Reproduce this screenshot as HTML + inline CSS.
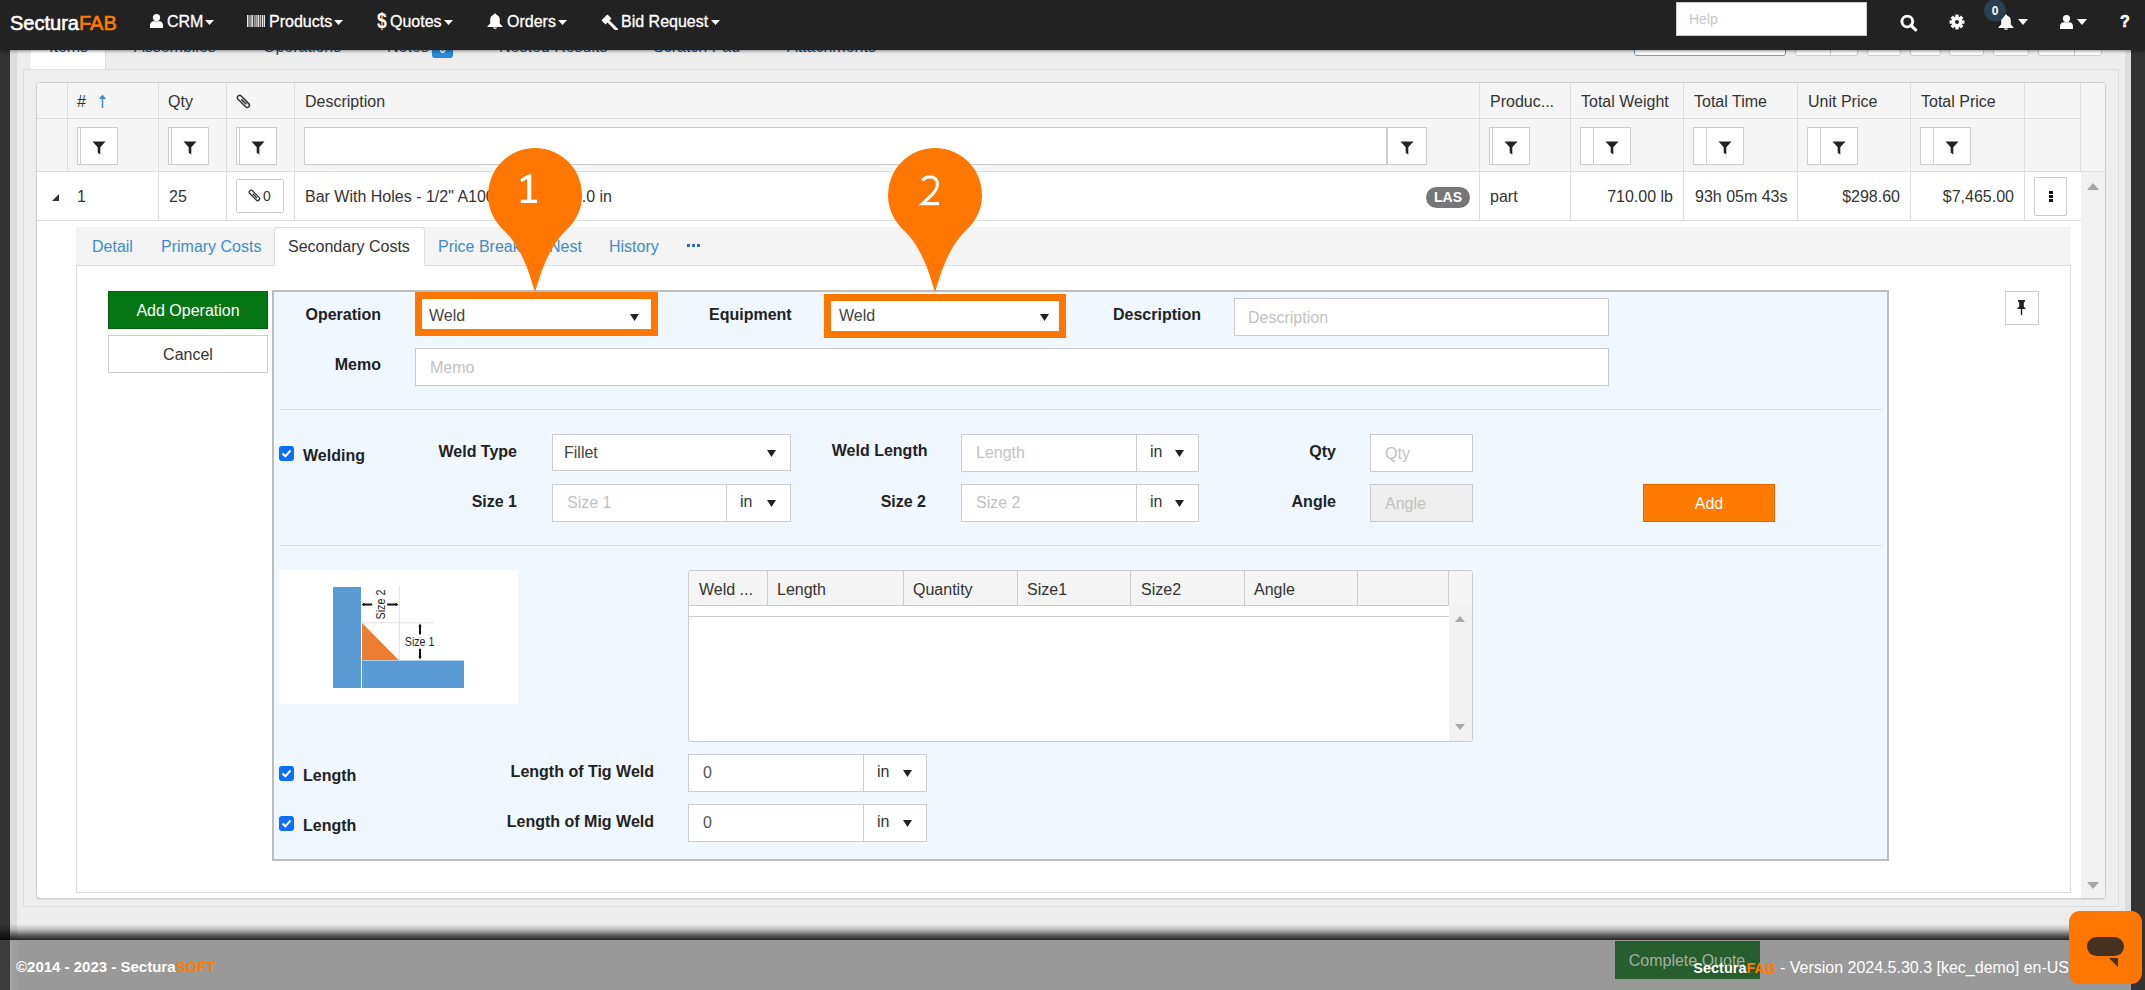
<!DOCTYPE html>
<html><head><meta charset="utf-8"><style>
html,body{margin:0;padding:0;width:2145px;height:990px;overflow:hidden;font-family:"Liberation Sans",sans-serif;}
.a{position:absolute;}
.t{position:absolute;white-space:nowrap;}
</style></head><body>
<div class="a" style="left:0px;top:0px;width:2145px;height:990px;background:#ededed"></div>
<div class="a" style="left:0px;top:0px;width:10px;height:990px;background:#333"></div>
<div class="a" style="left:10px;top:49px;width:7px;height:890px;background:#dcdcdc"></div>
<div class="a" style="left:2125px;top:49px;width:6px;height:890px;background:#dcdcdc"></div>
<div class="a" style="left:2131px;top:0px;width:14px;height:990px;background:#333"></div>
<div class="a" style="left:31px;top:30px;width:74px;height:39px;background:#fff;border-right:1px solid #ddd"></div>
<div class="t" style="top:37px;font-size:16px;font-weight:normal;color:#264d78;line-height:20px;font-family:'Liberation Sans',sans-serif;left:49px;">Items</div>
<div class="t" style="top:37px;font-size:16px;font-weight:normal;color:#264d78;line-height:20px;font-family:'Liberation Sans',sans-serif;left:134px;">Assemblies</div>
<div class="t" style="top:37px;font-size:16px;font-weight:normal;color:#264d78;line-height:20px;font-family:'Liberation Sans',sans-serif;left:263px;">Operations</div>
<div class="t" style="top:37px;font-size:16px;font-weight:normal;color:#264d78;line-height:20px;font-family:'Liberation Sans',sans-serif;left:387px;">Notes</div>
<div class="t" style="top:37px;font-size:16px;font-weight:normal;color:#264d78;line-height:20px;font-family:'Liberation Sans',sans-serif;left:499px;">Nested Results</div>
<div class="t" style="top:37px;font-size:16px;font-weight:normal;color:#264d78;line-height:20px;font-family:'Liberation Sans',sans-serif;left:653px;">Scratch Pad</div>
<div class="t" style="top:37px;font-size:16px;font-weight:normal;color:#264d78;line-height:20px;font-family:'Liberation Sans',sans-serif;left:787px;">Attachments</div>
<div class="a" style="left:432px;top:38px;width:21px;height:19.5px;background:#2a89d8;border-radius:3px"></div>
<div class="t" style="top:39px;font-size:12px;font-weight:bold;color:#fff;line-height:20px;font-family:'Liberation Sans',sans-serif;left:142.5px;width:600px;text-align:center;">0</div>
<div class="a" style="left:1634px;top:20px;width:152px;height:36px;background:#fff;border:1px solid #6a9cc5;border-radius:3px;box-sizing:border-box"></div>
<div class="a" style="left:1795px;top:20px;width:63px;height:36px;background:#fff;border:1px solid #ccc;border-radius:3px;box-sizing:border-box"></div>
<div class="a" style="left:1867px;top:20px;width:34px;height:36px;background:#fff;border:1px solid #ccc;border-radius:3px;box-sizing:border-box"></div>
<div class="a" style="left:1910px;top:20px;width:31px;height:36px;background:#fff;border:1px solid #ccc;border-radius:3px;box-sizing:border-box"></div>
<div class="a" style="left:1949px;top:20px;width:35px;height:36px;background:#fff;border:1px solid #ccc;border-radius:3px;box-sizing:border-box"></div>
<div class="a" style="left:1993px;top:20px;width:36px;height:36px;background:#fff;border:1px solid #ccc;border-radius:3px;box-sizing:border-box"></div>
<div class="a" style="left:2038px;top:20px;width:64px;height:36px;background:#fff;border:1px solid #ccc;border-radius:3px;box-sizing:border-box"></div>
<div class="a" style="left:1830px;top:20px;width:1px;height:36px;background:#ccc"></div>
<div class="a" style="left:2074px;top:20px;width:1px;height:36px;background:#ccc"></div>
<div class="a" style="left:23px;top:69px;width:2096px;height:838px;border:1px solid #ddd;box-sizing:border-box;background:#eee"></div>
<div class="a" style="left:36px;top:82px;width:2070px;height:817px;background:#fff;border:1px solid #ccc;border-radius:4px;box-sizing:border-box;box-shadow:0 1px 1px rgba(0,0,0,.08)"></div>
<div class="a" style="left:37px;top:83px;width:2068px;height:89px;background:#f5f5f5;border-radius:3px 3px 0 0"></div>
<div class="a" style="left:37px;top:118px;width:2044px;height:1px;background:#ddd"></div>
<div class="a" style="left:37px;top:171px;width:2068px;height:1px;background:#ddd"></div>
<div class="a" style="left:37px;top:220px;width:2044px;height:1px;background:#ddd"></div>
<div class="a" style="left:67px;top:83px;width:1px;height:89px;background:#ddd"></div>
<div class="a" style="left:158px;top:83px;width:1px;height:138px;background:#ddd"></div>
<div class="a" style="left:226px;top:83px;width:1px;height:138px;background:#ddd"></div>
<div class="a" style="left:294px;top:83px;width:1px;height:138px;background:#ddd"></div>
<div class="a" style="left:1479px;top:83px;width:1px;height:138px;background:#ddd"></div>
<div class="a" style="left:1570px;top:83px;width:1px;height:138px;background:#ddd"></div>
<div class="a" style="left:1683px;top:83px;width:1px;height:138px;background:#ddd"></div>
<div class="a" style="left:1797px;top:83px;width:1px;height:138px;background:#ddd"></div>
<div class="a" style="left:1910px;top:83px;width:1px;height:138px;background:#ddd"></div>
<div class="a" style="left:2024px;top:83px;width:1px;height:138px;background:#ddd"></div>
<div class="a" style="left:2080px;top:83px;width:1px;height:89px;background:#ddd"></div>
<div class="a" style="left:2080px;top:83px;width:1px;height:89px;background:#ddd"></div>
<div class="a" style="left:2081px;top:172px;width:24px;height:726px;background:#f1f1f1"></div>
<svg class="a" style="left:2087px;top:183px;" width="12" height="7" viewBox="0 0 12 7"><path d="M0 7H12L6 0Z" fill="#a8a8a8"/></svg>
<svg class="a" style="left:2087px;top:882px;" width="12" height="7" viewBox="0 0 12 7"><path d="M0 0H12L6 7Z" fill="#a8a8a8"/></svg>
<div class="t" style="top:92px;font-size:16px;font-weight:normal;color:#333;line-height:20px;font-family:'Liberation Sans',sans-serif;left:77px;">#</div>
<svg class="a" style="left:98px;top:94px;" width="9" height="14" viewBox="0 0 9 14"><path d="M4.5 0.5L1 5H3.8V14H5.2V5H8Z" fill="#3a8ad6"/></svg>
<div class="t" style="top:92px;font-size:16px;font-weight:normal;color:#333;line-height:20px;font-family:'Liberation Sans',sans-serif;left:168px;">Qty</div>
<div class="t" style="top:92px;font-size:16px;font-weight:normal;color:#333;line-height:20px;font-family:'Liberation Sans',sans-serif;left:305px;">Description</div>
<div class="t" style="top:92px;font-size:16px;font-weight:normal;color:#333;line-height:20px;font-family:'Liberation Sans',sans-serif;left:1490px;">Produc...</div>
<div class="t" style="top:92px;font-size:16px;font-weight:normal;color:#333;line-height:20px;font-family:'Liberation Sans',sans-serif;left:1581px;">Total Weight</div>
<div class="t" style="top:92px;font-size:16px;font-weight:normal;color:#333;line-height:20px;font-family:'Liberation Sans',sans-serif;left:1694px;">Total Time</div>
<div class="t" style="top:92px;font-size:16px;font-weight:normal;color:#333;line-height:20px;font-family:'Liberation Sans',sans-serif;left:1808px;">Unit Price</div>
<div class="t" style="top:92px;font-size:16px;font-weight:normal;color:#333;line-height:20px;font-family:'Liberation Sans',sans-serif;left:1921px;">Total Price</div>
<svg class="a" style="left:235.5px;top:93.5px;" width="15" height="15" viewBox="0 0 15 15"><g transform="translate(7.5 7.5) rotate(-45) translate(-3 -8.5)" fill="none" stroke="#333" stroke-width="1.5"><path d="M0.8 3V13.7A2.2 2.2 0 0 0 5.2 13.7V3A2.2 2.2 0 0 0 0.8 3"/><path d="M3 12.5V5.5"/></g></svg>
<div class="a" style="left:77px;top:127px;width:41px;height:38px;background:#fff;border:1px solid #ccc;box-sizing:border-box"></div>
<div class="a" style="left:80px;top:127px;width:1px;height:38px;background:#ccc"></div>
<svg class="a" style="left:92px;top:140.5px;" width="14" height="14" viewBox="0 0 14 14"><path d="M0.5 0.5H13.5L8.3 6.3V13.5L5.7 11.8V6.3Z" fill="#222"/></svg>
<div class="a" style="left:168px;top:127px;width:41px;height:38px;background:#fff;border:1px solid #ccc;box-sizing:border-box"></div>
<div class="a" style="left:171px;top:127px;width:1px;height:38px;background:#ccc"></div>
<svg class="a" style="left:183px;top:140.5px;" width="14" height="14" viewBox="0 0 14 14"><path d="M0.5 0.5H13.5L8.3 6.3V13.5L5.7 11.8V6.3Z" fill="#222"/></svg>
<div class="a" style="left:236px;top:127px;width:41px;height:38px;background:#fff;border:1px solid #ccc;box-sizing:border-box"></div>
<div class="a" style="left:239px;top:127px;width:1px;height:38px;background:#ccc"></div>
<svg class="a" style="left:251px;top:140.5px;" width="14" height="14" viewBox="0 0 14 14"><path d="M0.5 0.5H13.5L8.3 6.3V13.5L5.7 11.8V6.3Z" fill="#222"/></svg>
<div class="a" style="left:304px;top:127px;width:1083px;height:38px;background:#fff;border:1px solid #ccc;box-sizing:border-box"></div>
<div class="a" style="left:1387px;top:127px;width:40px;height:38px;background:#fff;border:1px solid #ccc;box-sizing:border-box"></div>
<svg class="a" style="left:1400px;top:140.5px;" width="14" height="14" viewBox="0 0 14 14"><path d="M0.5 0.5H13.5L8.3 6.3V13.5L5.7 11.8V6.3Z" fill="#222"/></svg>
<div class="a" style="left:1489px;top:127px;width:41px;height:38px;background:#fff;border:1px solid #ccc;box-sizing:border-box"></div>
<div class="a" style="left:1492px;top:127px;width:1px;height:38px;background:#ccc"></div>
<svg class="a" style="left:1504px;top:140.5px;" width="14" height="14" viewBox="0 0 14 14"><path d="M0.5 0.5H13.5L8.3 6.3V13.5L5.7 11.8V6.3Z" fill="#222"/></svg>
<div class="a" style="left:1580px;top:127px;width:51px;height:38px;background:#fff;border:1px solid #ccc;box-sizing:border-box"></div>
<div class="a" style="left:1593px;top:127px;width:1px;height:38px;background:#ccc"></div>
<svg class="a" style="left:1605px;top:140.5px;" width="14" height="14" viewBox="0 0 14 14"><path d="M0.5 0.5H13.5L8.3 6.3V13.5L5.7 11.8V6.3Z" fill="#222"/></svg>
<div class="a" style="left:1693px;top:127px;width:51px;height:38px;background:#fff;border:1px solid #ccc;box-sizing:border-box"></div>
<div class="a" style="left:1706px;top:127px;width:1px;height:38px;background:#ccc"></div>
<svg class="a" style="left:1718px;top:140.5px;" width="14" height="14" viewBox="0 0 14 14"><path d="M0.5 0.5H13.5L8.3 6.3V13.5L5.7 11.8V6.3Z" fill="#222"/></svg>
<div class="a" style="left:1807px;top:127px;width:51px;height:38px;background:#fff;border:1px solid #ccc;box-sizing:border-box"></div>
<div class="a" style="left:1820px;top:127px;width:1px;height:38px;background:#ccc"></div>
<svg class="a" style="left:1832px;top:140.5px;" width="14" height="14" viewBox="0 0 14 14"><path d="M0.5 0.5H13.5L8.3 6.3V13.5L5.7 11.8V6.3Z" fill="#222"/></svg>
<div class="a" style="left:1920px;top:127px;width:51px;height:38px;background:#fff;border:1px solid #ccc;box-sizing:border-box"></div>
<div class="a" style="left:1933px;top:127px;width:1px;height:38px;background:#ccc"></div>
<svg class="a" style="left:1945px;top:140.5px;" width="14" height="14" viewBox="0 0 14 14"><path d="M0.5 0.5H13.5L8.3 6.3V13.5L5.7 11.8V6.3Z" fill="#222"/></svg>
<svg class="a" style="left:52px;top:194px;" width="7" height="7" viewBox="0 0 7 7"><path d="M7 0V7H0Z" fill="#333"/></svg>
<div class="t" style="top:187px;font-size:16px;font-weight:normal;color:#333;line-height:20px;font-family:'Liberation Sans',sans-serif;left:77px;">1</div>
<div class="t" style="top:187px;font-size:16px;font-weight:normal;color:#333;line-height:20px;font-family:'Liberation Sans',sans-serif;left:169px;">25</div>
<div class="a" style="left:236px;top:179px;width:48px;height:34px;background:#fff;border:1px solid #ccc;border-radius:2px;box-sizing:border-box"></div>
<svg class="a" style="left:248px;top:189px;" width="13" height="13" viewBox="0 0 15 15"><g transform="translate(7.5 7.5) rotate(-45) translate(-3 -8.5)" fill="none" stroke="#333" stroke-width="1.5"><path d="M0.8 3V13.7A2.2 2.2 0 0 0 5.2 13.7V3A2.2 2.2 0 0 0 0.8 3"/><path d="M3 12.5V5.5"/></g></svg>
<div class="t" style="top:186px;font-size:14px;font-weight:normal;color:#333;line-height:20px;font-family:'Liberation Sans',sans-serif;left:263px;">0</div>
<div class="t" style="top:187px;font-size:16px;font-weight:normal;color:#333;line-height:20px;font-family:'Liberation Sans',sans-serif;left:305px;">Bar With Holes - 1/2" A1008 x 3</div>
<div class="t" style="top:187px;font-size:16px;font-weight:normal;color:#333;line-height:20px;font-family:'Liberation Sans',sans-serif;left:12px;width:600px;text-align:right;">x 36.0 in</div>
<div class="a" style="left:1426px;top:187px;width:44px;height:21px;background:#777;border-radius:11px"></div>
<div class="t" style="top:187px;font-size:14px;font-weight:bold;color:#fff;line-height:20px;font-family:'Liberation Sans',sans-serif;left:1148px;width:600px;text-align:center;">LAS</div>
<div class="t" style="top:187px;font-size:16px;font-weight:normal;color:#333;line-height:20px;font-family:'Liberation Sans',sans-serif;left:1490px;">part</div>
<div class="t" style="top:187px;font-size:16px;font-weight:normal;color:#333;line-height:20px;font-family:'Liberation Sans',sans-serif;left:1073px;width:600px;text-align:right;">710.00 lb</div>
<div class="t" style="top:187px;font-size:16px;font-weight:normal;color:#333;line-height:20px;font-family:'Liberation Sans',sans-serif;left:1695px;">93h 05m 43s</div>
<div class="t" style="top:187px;font-size:16px;font-weight:normal;color:#333;line-height:20px;font-family:'Liberation Sans',sans-serif;left:1300px;width:600px;text-align:right;">$298.60</div>
<div class="t" style="top:187px;font-size:16px;font-weight:normal;color:#333;line-height:20px;font-family:'Liberation Sans',sans-serif;left:1414px;width:600px;text-align:right;">$7,465.00</div>
<div class="a" style="left:2034px;top:177px;width:33px;height:39px;background:#fff;border:1px solid #ccc;border-radius:2px;box-sizing:border-box"></div>
<div class="a" style="left:2049px;top:190.5px;width:3.5px;height:3.0px;background:#111"></div>
<div class="a" style="left:2049px;top:194.5px;width:3.5px;height:3.0px;background:#111"></div>
<div class="a" style="left:2049px;top:198.5px;width:3.5px;height:3.0px;background:#111"></div>
<div class="a" style="left:76px;top:227px;width:1995px;height:38px;background:#f4f4f4"></div>
<div class="a" style="left:274px;top:227px;width:151px;height:39px;background:#fff;border:1px solid #ddd;border-bottom:none;border-radius:4px 4px 0 0;box-sizing:border-box"></div>
<div class="t" style="top:237px;font-size:16px;font-weight:normal;color:#428bca;line-height:20px;font-family:'Liberation Sans',sans-serif;left:92px;">Detail</div>
<div class="t" style="top:237px;font-size:16px;font-weight:normal;color:#428bca;line-height:20px;font-family:'Liberation Sans',sans-serif;left:161px;">Primary Costs</div>
<div class="t" style="top:237px;font-size:16px;font-weight:normal;color:#333;line-height:20px;font-family:'Liberation Sans',sans-serif;left:288px;">Secondary Costs</div>
<div class="t" style="top:237px;font-size:16px;font-weight:normal;color:#428bca;line-height:20px;font-family:'Liberation Sans',sans-serif;left:438px;">Price Breaks</div>
<div class="t" style="top:237px;font-size:16px;font-weight:normal;color:#428bca;line-height:20px;font-family:'Liberation Sans',sans-serif;left:549px;">Nest</div>
<div class="t" style="top:237px;font-size:16px;font-weight:normal;color:#428bca;line-height:20px;font-family:'Liberation Sans',sans-serif;left:609px;">History</div>
<div class="a" style="left:687px;top:244px;width:3px;height:3px;background:#2d6fb3"></div>
<div class="a" style="left:692px;top:244px;width:3px;height:3px;background:#2d6fb3"></div>
<div class="a" style="left:697px;top:244px;width:3px;height:3px;background:#2d6fb3"></div>
<div class="a" style="left:76px;top:266px;width:1995px;height:627px;background:#fff;border:1px solid #ddd;border-top:none;box-sizing:border-box"></div>
<div class="a" style="left:76px;top:265px;width:199px;height:1px;background:#ddd"></div>
<div class="a" style="left:424px;top:265px;width:1647px;height:1px;background:#ddd"></div>
<div class="a" style="left:108px;top:291px;width:160px;height:38px;background:#067514;border:1px solid #04600e;box-sizing:border-box"></div>
<div class="t" style="top:301px;font-size:16px;font-weight:normal;color:#fff;line-height:20px;font-family:'Liberation Sans',sans-serif;left:-112px;width:600px;text-align:center;">Add Operation</div>
<div class="a" style="left:108px;top:335px;width:160px;height:38px;background:#fff;border:1px solid #ccc;box-sizing:border-box"></div>
<div class="t" style="top:345px;font-size:16px;font-weight:normal;color:#333;line-height:20px;font-family:'Liberation Sans',sans-serif;left:-112px;width:600px;text-align:center;">Cancel</div>
<div class="a" style="left:2005px;top:291px;width:34px;height:34px;background:#fff;border:1px solid #ccc;box-sizing:border-box"></div>
<svg class="a" style="left:2015px;top:300px;" width="13" height="15" viewBox="0 0 13 15"><path d="M3 0H10V1.5L8.8 2.5V6.5L11 9H7.2V15H5.8V9H2L4.2 6.5V2.5L3 1.5Z" fill="#222"/></svg>
<div class="a" style="left:272px;top:290px;width:1617px;height:571px;background:#f0f7fe;border:2px solid #bdbdbd;box-sizing:border-box"></div>
<div class="t" style="top:305px;font-size:16px;font-weight:bold;color:#222;line-height:20px;font-family:'Liberation Sans',sans-serif;left:-219px;width:600px;text-align:right;">Operation</div>
<div class="t" style="top:355px;font-size:16px;font-weight:bold;color:#222;line-height:20px;font-family:'Liberation Sans',sans-serif;left:-219px;width:600px;text-align:right;">Memo</div>
<div class="t" style="top:305px;font-size:16px;font-weight:bold;color:#222;line-height:20px;font-family:'Liberation Sans',sans-serif;left:709px;">Equipment</div>
<div class="t" style="top:305px;font-size:16px;font-weight:bold;color:#222;line-height:20px;font-family:'Liberation Sans',sans-serif;left:1113px;">Description</div>
<div class="a" style="left:415px;top:292px;width:243px;height:44px;background:#fff;border:7px solid #ff7600;box-sizing:border-box"></div>
<div class="t" style="top:306px;font-size:16px;font-weight:normal;color:#444;line-height:20px;font-family:'Liberation Sans',sans-serif;left:429px;">Weld</div>
<svg class="a" style="left:630px;top:314px;" width="9" height="7" viewBox="0 0 9 7"><path d="M0 0H9L4.5 7Z" fill="#222"/></svg>
<div class="a" style="left:824px;top:294px;width:242px;height:44px;background:#fff;border:7px solid #ff7600;box-sizing:border-box"></div>
<div class="t" style="top:306px;font-size:16px;font-weight:normal;color:#444;line-height:20px;font-family:'Liberation Sans',sans-serif;left:839px;">Weld</div>
<svg class="a" style="left:1040px;top:314px;" width="9" height="7" viewBox="0 0 9 7"><path d="M0 0H9L4.5 7Z" fill="#222"/></svg>
<div class="a" style="left:1234px;top:298px;width:375px;height:38px;background:#fff;border:1px solid #ccc;box-sizing:border-box"></div>
<div class="t" style="top:308px;font-size:16px;font-weight:normal;color:#c2c2c2;line-height:20px;font-family:'Liberation Sans',sans-serif;left:1248px;">Description</div>
<div class="a" style="left:415px;top:348px;width:1194px;height:38px;background:#fff;border:1px solid #ccc;box-sizing:border-box"></div>
<div class="t" style="top:358px;font-size:16px;font-weight:normal;color:#c2c2c2;line-height:20px;font-family:'Liberation Sans',sans-serif;left:430px;">Memo</div>
<div class="a" style="left:279px;top:409px;width:1603px;height:1px;background:#ddd"></div>
<div class="a" style="left:279px;top:545px;width:1603px;height:1px;background:#ddd"></div>
<div class="a" style="left:279px;top:446px;width:15px;height:15px;background:#0d6efd;border-radius:3px"></div>
<svg class="a" style="left:279px;top:446px;" width="15" height="15" viewBox="0 0 15 15"><path d="M3.5 7.5L6.3 10.3L11.5 4.5" fill="none" stroke="#fff" stroke-width="2"/></svg>
<div class="t" style="top:446px;font-size:16px;font-weight:bold;color:#222;line-height:20px;font-family:'Liberation Sans',sans-serif;left:303px;">Welding</div>
<div class="t" style="top:442px;font-size:16px;font-weight:bold;color:#222;line-height:20px;font-family:'Liberation Sans',sans-serif;left:-83px;width:600px;text-align:right;">Weld Type</div>
<div class="a" style="left:552px;top:434px;width:239px;height:37px;background:#fff;border:1px solid #ccc;box-sizing:border-box"></div>
<div class="t" style="top:443px;font-size:16px;font-weight:normal;color:#444;line-height:20px;font-family:'Liberation Sans',sans-serif;left:564px;">Fillet</div>
<svg class="a" style="left:767px;top:450px;" width="9" height="7" viewBox="0 0 9 7"><path d="M0 0H9L4.5 7Z" fill="#222"/></svg>
<div class="t" style="top:441px;font-size:16px;font-weight:bold;color:#222;line-height:20px;font-family:'Liberation Sans',sans-serif;left:327.5px;width:600px;text-align:right;">Weld Length</div>
<div class="a" style="left:961px;top:434px;width:238px;height:38px;background:#fff;border:1px solid #ccc;box-sizing:border-box"></div>
<div class="a" style="left:1136px;top:434px;width:1px;height:38px;background:#ccc"></div>
<div class="t" style="top:443px;font-size:16px;font-weight:normal;color:#c2c2c2;line-height:20px;font-family:'Liberation Sans',sans-serif;left:976px;">Length</div>
<div class="t" style="top:442px;font-size:16px;font-weight:normal;color:#333;line-height:20px;font-family:'Liberation Sans',sans-serif;left:1150px;">in</div>
<svg class="a" style="left:1175px;top:450px;" width="9" height="7" viewBox="0 0 9 7"><path d="M0 0H9L4.5 7Z" fill="#222"/></svg>
<div class="t" style="top:442px;font-size:16px;font-weight:bold;color:#222;line-height:20px;font-family:'Liberation Sans',sans-serif;left:736px;width:600px;text-align:right;">Qty</div>
<div class="a" style="left:1370px;top:434px;width:103px;height:38px;background:#fff;border:1px solid #ccc;box-sizing:border-box"></div>
<div class="t" style="top:444px;font-size:16px;font-weight:normal;color:#c2c2c2;line-height:20px;font-family:'Liberation Sans',sans-serif;left:1385px;">Qty</div>
<div class="t" style="top:492px;font-size:16px;font-weight:bold;color:#222;line-height:20px;font-family:'Liberation Sans',sans-serif;left:-83px;width:600px;text-align:right;">Size 1</div>
<div class="a" style="left:552px;top:484px;width:239px;height:38px;background:#fff;border:1px solid #ccc;box-sizing:border-box"></div>
<div class="a" style="left:726px;top:484px;width:1px;height:38px;background:#ccc"></div>
<div class="t" style="top:493px;font-size:16px;font-weight:normal;color:#c2c2c2;line-height:20px;font-family:'Liberation Sans',sans-serif;left:567px;">Size 1</div>
<div class="t" style="top:492px;font-size:16px;font-weight:normal;color:#333;line-height:20px;font-family:'Liberation Sans',sans-serif;left:740px;">in</div>
<svg class="a" style="left:767px;top:500px;" width="9" height="7" viewBox="0 0 9 7"><path d="M0 0H9L4.5 7Z" fill="#222"/></svg>
<div class="t" style="top:492px;font-size:16px;font-weight:bold;color:#222;line-height:20px;font-family:'Liberation Sans',sans-serif;left:326px;width:600px;text-align:right;">Size 2</div>
<div class="a" style="left:961px;top:484px;width:238px;height:38px;background:#fff;border:1px solid #ccc;box-sizing:border-box"></div>
<div class="a" style="left:1136px;top:484px;width:1px;height:38px;background:#ccc"></div>
<div class="t" style="top:493px;font-size:16px;font-weight:normal;color:#c2c2c2;line-height:20px;font-family:'Liberation Sans',sans-serif;left:976px;">Size 2</div>
<div class="t" style="top:492px;font-size:16px;font-weight:normal;color:#333;line-height:20px;font-family:'Liberation Sans',sans-serif;left:1150px;">in</div>
<svg class="a" style="left:1175px;top:500px;" width="9" height="7" viewBox="0 0 9 7"><path d="M0 0H9L4.5 7Z" fill="#222"/></svg>
<div class="t" style="top:492px;font-size:16px;font-weight:bold;color:#222;line-height:20px;font-family:'Liberation Sans',sans-serif;left:736px;width:600px;text-align:right;">Angle</div>
<div class="a" style="left:1370px;top:484px;width:103px;height:38px;background:#eee;border:1px solid #ccc;box-sizing:border-box"></div>
<div class="t" style="top:494px;font-size:16px;font-weight:normal;color:#c2c2c2;line-height:20px;font-family:'Liberation Sans',sans-serif;left:1385px;">Angle</div>
<div class="a" style="left:1643px;top:484px;width:132px;height:38px;background:#ff7a00;border:1px solid #e06800;box-sizing:border-box"></div>
<div class="t" style="top:494px;font-size:16px;font-weight:normal;color:#fff;line-height:20px;font-family:'Liberation Sans',sans-serif;left:1409px;width:600px;text-align:center;">Add</div>
<div class="a" style="left:279px;top:570px;width:239px;height:134px;background:#fff"></div>
<svg class="a" style="left:279px;top:570px;" width="239" height="134" viewBox="0 0 239 134">
<rect x="54" y="17" width="28" height="101" fill="#5b9bd5"/>
<rect x="83" y="90.5" width="102" height="27.5" fill="#5b9bd5"/>
<path d="M83 53V90H119.7Z" fill="#ed7d31"/>
<path d="M120.3 16V90M83 52.8H155" stroke="#d9d9d9" stroke-width="0.8" fill="none"/>
<path d="M84 34.5H93.2M108.2 34.5H118" stroke="#111" stroke-width="2"/>
<path d="M82.5 34.5L85.5 32.8V36.2Z M119.5 34.5L116.5 32.8V36.2Z" fill="#111"/>
<path d="M141 55V64.5M141 78.7V88" stroke="#111" stroke-width="2"/>
<path d="M141 53.5L139.3 56.5H142.7Z M141 89.6L139.3 86.6H142.7Z" fill="#111"/>
<text x="140.6" y="76.2" font-family="Liberation Sans" font-size="12" text-anchor="middle" textLength="29.6" lengthAdjust="spacingAndGlyphs" fill="#222">Size 1</text>
<text transform="translate(106 34.5) rotate(-90)" font-family="Liberation Sans" font-size="12" text-anchor="middle" textLength="30" lengthAdjust="spacingAndGlyphs" fill="#222">Size 2</text>
</svg>
<div class="a" style="left:688px;top:570px;width:785px;height:172px;background:#fff;border:1px solid #ccc;border-radius:3px;box-sizing:border-box"></div>
<div class="a" style="left:689px;top:571px;width:783px;height:34px;background:#f4f4f4;border-radius:2px 2px 0 0"></div>
<div class="a" style="left:689px;top:605px;width:760px;height:1px;background:#ccc"></div>
<div class="a" style="left:689px;top:616px;width:760px;height:1px;background:#ccc"></div>
<div class="a" style="left:767px;top:571px;width:1px;height:34px;background:#ccc"></div>
<div class="a" style="left:903px;top:571px;width:1px;height:34px;background:#ccc"></div>
<div class="a" style="left:1017px;top:571px;width:1px;height:34px;background:#ccc"></div>
<div class="a" style="left:1130px;top:571px;width:1px;height:34px;background:#ccc"></div>
<div class="a" style="left:1244px;top:571px;width:1px;height:34px;background:#ccc"></div>
<div class="a" style="left:1357px;top:571px;width:1px;height:34px;background:#ccc"></div>
<div class="a" style="left:1448px;top:571px;width:1px;height:34px;background:#ccc"></div>
<div class="a" style="left:1449px;top:605px;width:23px;height:136px;background:#f1f1f1"></div>
<svg class="a" style="left:1455px;top:616px;" width="10" height="6" viewBox="0 0 10 6"><path d="M0 6H10L5 0Z" fill="#a8a8a8"/></svg>
<svg class="a" style="left:1455px;top:724px;" width="10" height="6" viewBox="0 0 10 6"><path d="M0 0H10L5 6Z" fill="#a8a8a8"/></svg>
<div class="t" style="top:580px;font-size:16px;font-weight:normal;color:#333;line-height:20px;font-family:'Liberation Sans',sans-serif;left:699px;">Weld ...</div>
<div class="t" style="top:580px;font-size:16px;font-weight:normal;color:#333;line-height:20px;font-family:'Liberation Sans',sans-serif;left:777px;">Length</div>
<div class="t" style="top:580px;font-size:16px;font-weight:normal;color:#333;line-height:20px;font-family:'Liberation Sans',sans-serif;left:913px;">Quantity</div>
<div class="t" style="top:580px;font-size:16px;font-weight:normal;color:#333;line-height:20px;font-family:'Liberation Sans',sans-serif;left:1027px;">Size1</div>
<div class="t" style="top:580px;font-size:16px;font-weight:normal;color:#333;line-height:20px;font-family:'Liberation Sans',sans-serif;left:1141px;">Size2</div>
<div class="t" style="top:580px;font-size:16px;font-weight:normal;color:#333;line-height:20px;font-family:'Liberation Sans',sans-serif;left:1254px;">Angle</div>
<div class="a" style="left:279px;top:766px;width:15px;height:15px;background:#0d6efd;border-radius:3px"></div>
<svg class="a" style="left:279px;top:766px;" width="15" height="15" viewBox="0 0 15 15"><path d="M3.5 7.5L6.3 10.3L11.5 4.5" fill="none" stroke="#fff" stroke-width="2"/></svg>
<div class="t" style="top:766px;font-size:16px;font-weight:bold;color:#222;line-height:20px;font-family:'Liberation Sans',sans-serif;left:303px;">Length</div>
<div class="t" style="top:762px;font-size:16px;font-weight:bold;color:#222;line-height:20px;font-family:'Liberation Sans',sans-serif;left:54px;width:600px;text-align:right;">Length of Tig Weld</div>
<div class="a" style="left:688px;top:754px;width:239px;height:38px;background:#fff;border:1px solid #ccc;box-sizing:border-box"></div>
<div class="a" style="left:863px;top:754px;width:1px;height:38px;background:#ccc"></div>
<div class="t" style="top:763px;font-size:16px;font-weight:normal;color:#555;line-height:20px;font-family:'Liberation Sans',sans-serif;left:703px;">0</div>
<div class="t" style="top:762px;font-size:16px;font-weight:normal;color:#333;line-height:20px;font-family:'Liberation Sans',sans-serif;left:877px;">in</div>
<svg class="a" style="left:903px;top:770px;" width="9" height="7" viewBox="0 0 9 7"><path d="M0 0H9L4.5 7Z" fill="#222"/></svg>
<div class="a" style="left:279px;top:816px;width:15px;height:15px;background:#0d6efd;border-radius:3px"></div>
<svg class="a" style="left:279px;top:816px;" width="15" height="15" viewBox="0 0 15 15"><path d="M3.5 7.5L6.3 10.3L11.5 4.5" fill="none" stroke="#fff" stroke-width="2"/></svg>
<div class="t" style="top:816px;font-size:16px;font-weight:bold;color:#222;line-height:20px;font-family:'Liberation Sans',sans-serif;left:303px;">Length</div>
<div class="t" style="top:812px;font-size:16px;font-weight:bold;color:#222;line-height:20px;font-family:'Liberation Sans',sans-serif;left:54px;width:600px;text-align:right;">Length of Mig Weld</div>
<div class="a" style="left:688px;top:804px;width:239px;height:38px;background:#fff;border:1px solid #ccc;box-sizing:border-box"></div>
<div class="a" style="left:863px;top:804px;width:1px;height:38px;background:#ccc"></div>
<div class="t" style="top:813px;font-size:16px;font-weight:normal;color:#555;line-height:20px;font-family:'Liberation Sans',sans-serif;left:703px;">0</div>
<div class="t" style="top:812px;font-size:16px;font-weight:normal;color:#333;line-height:20px;font-family:'Liberation Sans',sans-serif;left:877px;">in</div>
<svg class="a" style="left:903px;top:820px;" width="9" height="7" viewBox="0 0 9 7"><path d="M0 0H9L4.5 7Z" fill="#222"/></svg>
<div class="a" style="left:0px;top:0px;width:2145px;height:49.5px;background:#222;box-shadow:0 1px 3px rgba(0,0,0,.45)"></div>
<div class="t" style="top:13px;font-size:20px;font-weight:normal;color:#fff;line-height:20px;font-family:'Liberation Sans',sans-serif;left:10px;-webkit-text-stroke:0.6px #fff">Sectura<span style="color:#ff7b00;-webkit-text-stroke:0.6px #ff7b00">FAB</span></div>
<svg class="a" style="left:150px;top:14px;" width="13" height="14" viewBox="0 0 13 14"><circle cx="6.5" cy="3.6" r="3.6" fill="#fff"/><path d="M0 14V11C0 8.5 2 7.2 3.5 7.2H9.5C11 7.2 13 8.5 13 11V14Z" fill="#fff"/></svg>
<div class="t" style="top:12px;font-size:16px;font-weight:normal;color:#fff;line-height:20px;font-family:'Liberation Sans',sans-serif;left:167px;-webkit-text-stroke:0.3px #fff">CRM</div>
<svg class="a" style="left:205px;top:20px;" width="9" height="5" viewBox="0 0 9 5"><path d="M0 0H9L4.5 5Z" fill="#fff"/></svg>
<svg class="a" style="left:247px;top:15px;" width="18" height="12" viewBox="0 0 18 12"><rect x="0" y="0" width="1.5" height="12" fill="#e8e8e8"/><rect x="2.5" y="0" width="1" height="12" fill="#e8e8e8"/><rect x="4.3" y="0" width="1.6" height="12" fill="#e8e8e8"/><rect x="6.8" y="0" width="0.8" height="12" fill="#e8e8e8"/><rect x="8.5" y="0" width="1.2" height="12" fill="#e8e8e8"/><rect x="10.5" y="0" width="1.8" height="12" fill="#e8e8e8"/><rect x="13.2" y="0" width="1" height="12" fill="#e8e8e8"/><rect x="15" y="0" width="1.2" height="12" fill="#e8e8e8"/><rect x="16.8" y="0" width="1.2" height="12" fill="#e8e8e8"/></svg>
<div class="t" style="top:12px;font-size:16px;font-weight:normal;color:#fff;line-height:20px;font-family:'Liberation Sans',sans-serif;left:269px;-webkit-text-stroke:0.3px #fff">Products</div>
<svg class="a" style="left:334px;top:20px;" width="9" height="5" viewBox="0 0 9 5"><path d="M0 0H9L4.5 5Z" fill="#fff"/></svg>
<div class="t" style="top:9px;font-size:22px;font-weight:bold;color:#fff;line-height:24px;font-family:'Liberation Sans',sans-serif;left:376.5px;transform:scaleX(0.8);transform-origin:left">$</div>
<div class="t" style="top:12px;font-size:16px;font-weight:normal;color:#fff;line-height:20px;font-family:'Liberation Sans',sans-serif;left:390px;-webkit-text-stroke:0.3px #fff">Quotes</div>
<svg class="a" style="left:444px;top:20px;" width="9" height="5" viewBox="0 0 9 5"><path d="M0 0H9L4.5 5Z" fill="#fff"/></svg>
<svg class="a" style="left:487px;top:13px;" width="16" height="16" viewBox="0 0 16 16"><path d="M8 0.5C8.9 0.5 9.3 1.2 9.3 1.8C11.6 2.4 12.8 4.3 12.8 6.8V10.5L15.5 13.2V14H0.5V13.2L3.2 10.5V6.8C3.2 4.3 4.4 2.4 6.7 1.8C6.7 1.2 7.1 0.5 8 0.5ZM6 14.6H10C10 15.4 9.1 16 8 16C6.9 16 6 15.4 6 14.6Z" fill="#fff"/></svg>
<div class="t" style="top:12px;font-size:16px;font-weight:normal;color:#fff;line-height:20px;font-family:'Liberation Sans',sans-serif;left:507px;-webkit-text-stroke:0.3px #fff">Orders</div>
<svg class="a" style="left:558px;top:20px;" width="9" height="5" viewBox="0 0 9 5"><path d="M0 0H9L4.5 5Z" fill="#fff"/></svg>
<svg class="a" style="left:601px;top:14px;" width="17" height="16" viewBox="0 0 17 16"><path d="M1 6L6 1L8.5 3.5L3.5 8.5Z M4.5 4.5L8 8L15.5 15" stroke="#fff" stroke-width="0" fill="#fff"/><path d="M7.5 7.5L15.5 15.5" stroke="#fff" stroke-width="3" stroke-linecap="round"/><path d="M0.5 6.5L6.5 0.5L10.5 4.5L4.5 10.5Z" fill="#fff"/></svg>
<div class="t" style="top:12px;font-size:16px;font-weight:normal;color:#fff;line-height:20px;font-family:'Liberation Sans',sans-serif;left:621px;-webkit-text-stroke:0.3px #fff">Bid Request</div>
<svg class="a" style="left:711px;top:20px;" width="9" height="5" viewBox="0 0 9 5"><path d="M0 0H9L4.5 5Z" fill="#fff"/></svg>
<div class="a" style="left:1676px;top:2px;width:191px;height:34px;background:#fff;border:1px solid #ccc;box-sizing:border-box"></div>
<div class="t" style="top:9px;font-size:14px;font-weight:normal;color:#c8c8c8;line-height:20px;font-family:'Liberation Sans',sans-serif;left:1689px;">Help</div>
<svg class="a" style="left:1900px;top:13.5px;" width="18" height="18" viewBox="0 0 18 18"><circle cx="7.3" cy="7.5" r="5.4" fill="none" stroke="#fff" stroke-width="2.9"/><path d="M11 11.3L15.6 15.8" stroke="#fff" stroke-width="3.2" stroke-linecap="round"/></svg>
<svg class="a" style="left:1949px;top:13.5px;" width="16" height="16" viewBox="0 0 16 16"><g transform="translate(8 8)"><circle r="5.4" fill="#fff"/><rect x="-1.7" y="-7.4" width="3.4" height="4" fill="#fff" transform="rotate(0)"/><rect x="-1.7" y="-7.4" width="3.4" height="4" fill="#fff" transform="rotate(45)"/><rect x="-1.7" y="-7.4" width="3.4" height="4" fill="#fff" transform="rotate(90)"/><rect x="-1.7" y="-7.4" width="3.4" height="4" fill="#fff" transform="rotate(135)"/><rect x="-1.7" y="-7.4" width="3.4" height="4" fill="#fff" transform="rotate(180)"/><rect x="-1.7" y="-7.4" width="3.4" height="4" fill="#fff" transform="rotate(225)"/><rect x="-1.7" y="-7.4" width="3.4" height="4" fill="#fff" transform="rotate(270)"/><rect x="-1.7" y="-7.4" width="3.4" height="4" fill="#fff" transform="rotate(315)"/><circle r="2" fill="#222"/></g></svg>
<svg class="a" style="left:1998px;top:14px;" width="16" height="16" viewBox="0 0 16 16"><path d="M8 0.5C8.9 0.5 9.3 1.2 9.3 1.8C11.6 2.4 12.8 4.3 12.8 6.8V10.5L15.5 13.2V14H0.5V13.2L3.2 10.5V6.8C3.2 4.3 4.4 2.4 6.7 1.8C6.7 1.2 7.1 0.5 8 0.5ZM6 14.6H10C10 15.4 9.1 16 8 16C6.9 16 6 15.4 6 14.6Z" fill="#fff"/></svg>
<svg class="a" style="left:1984px;top:0px;" width="22" height="22" viewBox="0 0 22 22"><circle cx="11" cy="10.5" r="11" fill="#2c3e50"/></svg>
<div class="t" style="top:1px;font-size:12px;font-weight:bold;color:#fff;line-height:20px;font-family:'Liberation Sans',sans-serif;left:1695px;width:600px;text-align:center;">0</div>
<svg class="a" style="left:2018px;top:19px;" width="10" height="6" viewBox="0 0 10 6"><path d="M0 0H10L5.0 6Z" fill="#fff"/></svg>
<svg class="a" style="left:2060px;top:15px;" width="13" height="14" viewBox="0 0 13 14"><circle cx="6.5" cy="3.6" r="3.6" fill="#fff"/><path d="M0 14V11C0 8.5 2 7.2 3.5 7.2H9.5C11 7.2 13 8.5 13 11V14Z" fill="#fff"/></svg>
<svg class="a" style="left:2077px;top:19px;" width="10" height="6" viewBox="0 0 10 6"><path d="M0 0H10L5.0 6Z" fill="#fff"/></svg>
<div class="t" style="top:12px;font-size:16px;font-weight:bold;color:#fff;line-height:20px;font-family:'Liberation Sans',sans-serif;left:1825px;width:600px;text-align:center;-webkit-text-stroke:0.6px #fff">?</div>
<svg class="a" style="left:486.6px;top:146.7px;" width="96" height="150" viewBox="0 0 96 150"><path d="M16.03 82.45A47 47 0 1 1 79.97 82.45C58.52 102.36 51.57 134.88 48 145.30C44.43 134.88 37.48 102.36 16.03 82.45Z" fill="#ff7600"/></svg>
<svg class="a" style="left:887.2px;top:146.6px;" width="96" height="150" viewBox="0 0 96 150"><path d="M16.03 82.45A47 47 0 1 1 79.97 82.45C58.52 102.36 51.57 134.88 48 145.30C44.43 134.88 37.48 102.36 16.03 82.45Z" fill="#ff7600"/></svg>
<svg class="a" style="left:500px;top:160px;" width="60" height="60" viewBox="500 160 60 60"><path d="M520.2 179.6L527 175L531.3 174.1V199.8H537.1V203.1H520.7V199.8H527.2V178.8L521.8 182.2Z" fill="#fff"/></svg>
<svg class="a" style="left:900px;top:160px;" width="60" height="60" viewBox="900 160 60 60"><path d="M922.3 180.5C924.5 177.8 927.2 176.9 930.1 176.9C934.6 176.9 937.4 179.6 937.4 184.2C937.4 188.2 935.4 191.2 931.3 195.3L922.5 203.6H939.1" fill="none" stroke="#fff" stroke-width="3.1"/></svg>
<div class="a" style="left:0px;top:924px;width:2131px;height:16px;background:linear-gradient(to bottom, rgba(0,0,0,0) 0%, rgba(0,0,0,.2) 35%, rgba(0,0,0,.6) 70%, rgba(0,0,0,.85) 100%)"></div>
<div class="a" style="left:10px;top:940px;width:2121px;height:50px;background:#999"></div>
<div class="a" style="left:10px;top:940px;width:2px;height:50px;background:#a6a6a6"></div>
<div class="a" style="left:12px;top:940px;width:5px;height:50px;background:#9e9e9e"></div>
<div class="a" style="left:0px;top:940px;width:10px;height:50px;background:#3b3b3b"></div>
<div class="t" style="top:957px;font-size:15px;font-weight:bold;color:#fff;line-height:20px;font-family:'Liberation Sans',sans-serif;left:16px;">&copy;2014 - 2023 - Sectura<span style="color:#ff7b00">SOFT</span></div>
<div class="a" style="left:1615px;top:941px;width:145px;height:38px;background:#265e2d"></div>
<div class="t" style="top:951px;font-size:16px;font-weight:normal;color:#a5ae9f;line-height:20px;font-family:'Liberation Sans',sans-serif;left:1387px;width:600px;text-align:center;">Complete Quote</div>
<div class="t" style="top:958px;font-size:16px;font-weight:normal;color:#fff;line-height:20px;font-family:'Liberation Sans',sans-serif;left:1469px;width:600px;text-align:right;"><b style="font-size:14.5px">Sectura<span style="color:#ff7b00">FAB</span></b> - Version 2024.5.30.3 [kec_demo] en-US</div>
<div class="a" style="left:2069px;top:911px;width:73px;height:73px;background:#ff7600;border-radius:11px"></div>
<div class="a" style="left:2087px;top:937px;width:37px;height:19px;background:#45311f;border-radius:10px"></div>
<svg class="a" style="left:2109px;top:958px;" width="9" height="9" viewBox="0 0 9 9"><path d="M0 0H9V9Z" fill="#45311f"/></svg>
</body></html>
